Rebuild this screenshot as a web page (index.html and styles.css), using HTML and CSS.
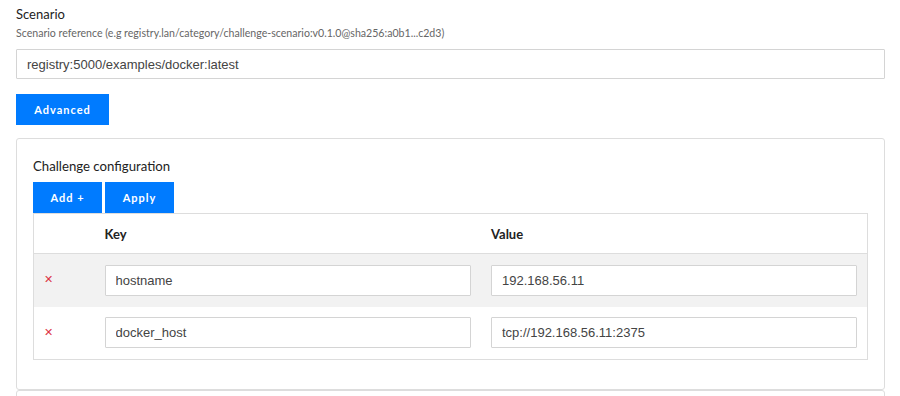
FILE: index.html
```html
<!DOCTYPE html>
<html lang="en">
<head>
    <meta charset="UTF-8">
    <meta name="viewport" content="width=device-width, initial-scale=1.0">
    <title>Scenario</title>
    <link rel="stylesheet" href="styles.css">
</head>
<body>
    <div class="page">
        <label class="field-label">Scenario</label>
        <div class="help">Scenario reference (e.g registry.lan/category/challenge-scenario:v0.1.0@sha256:a0b1...c2d3)</div>
        <input class="text-input scenario-input" type="text" value="registry:5000/examples/docker:latest">
        <button class="btn advanced-btn">Advanced</button>

        <div class="card">
            <div class="card-title">Challenge configuration</div>
            <div class="toolbar">
                <button class="btn">Add +</button>
                <button class="btn">Apply</button>
            </div>
            <table class="config-table">
                <colgroup>
                    <col class="col-remove">
                    <col>
                    <col>
                </colgroup>
                <thead>
                    <tr>
                        <th></th>
                        <th>Key</th>
                        <th>Value</th>
                    </tr>
                </thead>
                <tbody>
                    <tr class="striped">
                        <td class="remove">&#x2715;</td>
                        <td><input class="text-input" type="text" value="hostname"></td>
                        <td><input class="text-input" type="text" value="192.168.56.11"></td>
                    </tr>
                    <tr>
                        <td class="remove">&#x2715;</td>
                        <td><input class="text-input" type="text" value="docker_host"></td>
                        <td><input class="text-input" type="text" value="tcp://192.168.56.11:2375"></td>
                    </tr>
                </tbody>
            </table>
        </div>
        <div class="card next-card"></div>
    </div>
</body>
</html>
```

FILE: styles.css
```css
body, html {
    margin: 0;
    background-color: #fff;
    font-family: Lato, "Open Sans", sans-serif;
    color: #333;
    overflow: hidden;
}
.page {
    padding: 5px 15px 0 16px;
    width: 869px;
}
.field-label {
    display: block;
    font-size: 13px;
    line-height: 18px;
    color: #222;
}
.help {
    font-size: 10.6px;
    line-height: 14px;
    color: #666;
    margin-top: 3px;
}
.text-input {
    display: block;
    box-sizing: border-box;
    width: 100%;
    height: 31px;
    padding: 0 10px;
    border: 1px solid #d4d4d4;
    border-radius: 1px;
    font-family: "Liberation Sans", Arial, sans-serif;
    font-size: 13px;
    color: #444;
    background: #fff;
}
.scenario-input {
    margin-top: 9px;
    height: 30px;
}
.btn {
    background: #007bff;
    color: #fff;
    border: none;
    border-radius: 0;
    font-family: Lato, sans-serif;
    font-weight: bold;
    font-size: 11px;
    letter-spacing: 1px;
    height: 31px;
    width: 69px;
    padding: 0;
    cursor: pointer;
}
.advanced-btn {
    display: block;
    margin-top: 15px;
    width: 93px;
}
.card {
    margin-top: 13px;
    border: 1px solid #ddd;
    border-radius: 3px;
    padding: 18px 16px 29px 16px;
}
.card-title {
    font-size: 13.2px;
    line-height: 18px;
    color: #222;
}
.toolbar {
    display: flex;
    gap: 3px;
    margin-top: 7px;
}
.config-table {
    width: 100%;
    border-collapse: collapse;
    border: 1px solid #ddd;
    table-layout: fixed;
}
.col-remove {
    width: 61px;
}
.config-table th {
    text-align: left;
    font-size: 13px;
    font-weight: bold;
    color: #222;
    height: 39px;
    padding: 0 10px;
    border-bottom: 1px solid #ddd;
}
.config-table tbody tr {
    height: 53px;
}
.config-table td {
    padding: 0 10px;
    line-height: 14px;
    vertical-align: middle;
}
.config-table tr.striped td {
    background: #f2f2f2;
}
.remove {
    color: #dc3545;
    font-family: "DejaVu Sans", sans-serif;
    font-size: 11px;
}
.next-card {
    margin-top: 0;
    padding: 0;
    height: 20px;
}
```
